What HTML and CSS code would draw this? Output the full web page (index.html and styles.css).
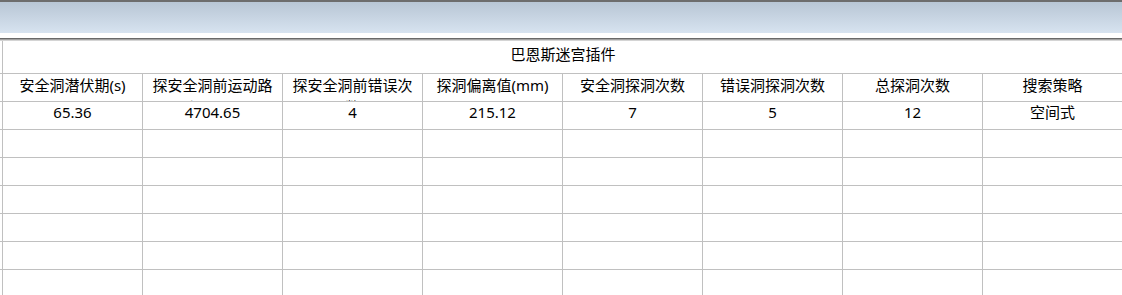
FILE: index.html
```html
<!DOCTYPE html>
<html lang="zh-CN">
<head>
<meta charset="utf-8">
<title>巴恩斯迷宫插件</title>
<link rel="stylesheet" href="styles.css">
</head>
<body>
<div class="window">
  <div class="caption"></div>
  <div class="gap"></div>
  <div class="rule"></div>
  <div class="grid">
    <div class="cell lead"></div>
    <div class="cell title">巴恩斯迷宫插件</div>

    <div class="cell lead"></div>
    <div class="cell head">安全洞潜伏期(s)</div>
    <div class="cell head">探安全洞前运动路程(mm)</div>
    <div class="cell head">探安全洞前错误次数</div>
    <div class="cell head">探洞偏离值(mm)</div>
    <div class="cell head">安全洞探洞次数</div>
    <div class="cell head">错误洞探洞次数</div>
    <div class="cell head">总探洞次数</div>
    <div class="cell head">搜索策略</div>

    <div class="cell lead"></div>
    <div class="cell">65.36</div>
    <div class="cell">4704.65</div>
    <div class="cell">4</div>
    <div class="cell">215.12</div>
    <div class="cell">7</div>
    <div class="cell">5</div>
    <div class="cell">12</div>
    <div class="cell">空间式</div>

    <div class="cell lead"></div><div class="cell"></div><div class="cell"></div><div class="cell"></div><div class="cell"></div><div class="cell"></div><div class="cell"></div><div class="cell"></div><div class="cell"></div>
    <div class="cell lead"></div><div class="cell"></div><div class="cell"></div><div class="cell"></div><div class="cell"></div><div class="cell"></div><div class="cell"></div><div class="cell"></div><div class="cell"></div>
    <div class="cell lead"></div><div class="cell"></div><div class="cell"></div><div class="cell"></div><div class="cell"></div><div class="cell"></div><div class="cell"></div><div class="cell"></div><div class="cell"></div>
    <div class="cell lead"></div><div class="cell"></div><div class="cell"></div><div class="cell"></div><div class="cell"></div><div class="cell"></div><div class="cell"></div><div class="cell"></div><div class="cell"></div>
    <div class="cell lead"></div><div class="cell"></div><div class="cell"></div><div class="cell"></div><div class="cell"></div><div class="cell"></div><div class="cell"></div><div class="cell"></div><div class="cell"></div>
    <div class="cell lead"></div><div class="cell"></div><div class="cell"></div><div class="cell"></div><div class="cell"></div><div class="cell"></div><div class="cell"></div><div class="cell"></div><div class="cell"></div>
  </div>
</div>
</body>
</html>
```
FILE: styles.css
```css
html, body {
  margin: 0;
  padding: 0;
  background: #ffffff;
  overflow: hidden;
}

.window {
  width: 1122px;
  font-family: "Noto Sans", "Noto Sans CJK SC", sans-serif;
  font-size: 15px;
  color: #000000;
}

/* title strip of the window */
.caption {
  height: 31px;
  border-top: 2px solid #6d6d6d;
  background: linear-gradient(to bottom, #b8c6d5, #d7e3f0);
}

.gap {
  height: 5px;
  background: #ffffff;
}

.rule {
  height: 3px;
  background: linear-gradient(to bottom, #696969 0, #696969 1px, #a2a2a2 1px, #a2a2a2 2px, #d4d4d4 2px);
}

/* data grid: a thin leading column, then eight 140px columns */
.grid {
  display: grid;
  grid-template-columns: 3px repeat(8, 140px);
  grid-template-rows: 33px;
  grid-auto-rows: 28px;
}

.cell {
  box-sizing: border-box;
  border-right: 1px solid #c0c0c0;
  border-bottom: 1px solid #c0c0c0;
  padding: 0 4px;
  line-height: 20px;
  text-align: center;
  overflow: hidden;
}

.lead {
  padding: 0;
}

.title {
  grid-column: 2 / span 8;
  padding-top: 3px;
  border-right: none;
}

/* long header captions wrap; the second line is clipped by the row */
.head {
  line-height: 22px;
}
```
